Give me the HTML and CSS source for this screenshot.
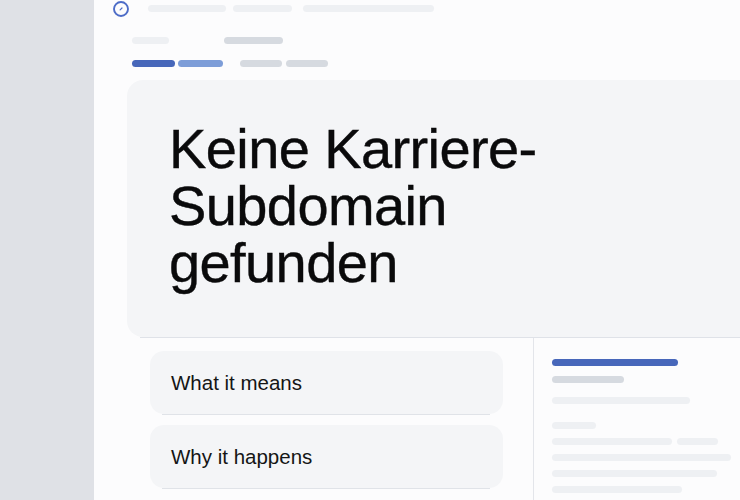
FILE: index.html
```html
<!DOCTYPE html>
<html lang="de">
<head>
<meta charset="utf-8">
<title>Keine Karriere-Subdomain gefunden</title>
<link rel="stylesheet" href="styles.css">
</head>
<body>
<aside class="sidebar"></aside>
<main class="main">
  <div class="topbar">
    <svg class="logo" width="18" height="18" viewBox="0 0 18 18" aria-hidden="true">
      <circle cx="9" cy="9" r="7" fill="none" stroke="#4d6cc7" stroke-width="1.9"/>
      <path d="M8.1 9.9 L10 8" stroke="#4d6cc7" stroke-width="1.2" stroke-linecap="round"/>
    </svg>
    <span class="bar light w78"></span>
    <span class="bar light w59 g7"></span>
    <span class="bar light w131 g11"></span>
  </div>
  <div class="row2">
    <span class="bar light w37"></span>
    <span class="bar mid w59 g55"></span>
  </div>
  <div class="row3">
    <span class="bar blue w43"></span>
    <span class="bar sky w45 g3"></span>
    <span class="bar mid w42 g17"></span>
    <span class="bar mid w42 g4"></span>
  </div>
  <section class="hero">
    <h1 class="title">Keine Karriere-<br>Subdomain<br>gefunden</h1>
  </section>
  <div class="hero-rule"></div>
  <div class="lower">
    <div class="left-col">
      <div class="acc">What it means</div>
      <div class="acc-rule"></div>
      <div class="acc acc-2">Why it happens</div>
      <div class="acc-rule"></div>
    </div>
    <div class="right-col">
      <span class="bar blue w126"></span>
      <span class="bar mid w72 t10"></span>
      <span class="bar light w138 t14"></span>
      <span class="bar light w44 t18"></span>
      <div class="pair t9"><span class="bar light w120"></span><span class="bar light w41 g5"></span></div>
      <span class="bar light w179 t9"></span>
      <span class="bar light w165 t9"></span>
      <span class="bar light w130 t9"></span>
    </div>
  </div>
</main>
</body>
</html>
```
FILE: styles.css
```css
html, body {
  margin: 0;
  padding: 0;
  width: 740px;
  height: 500px;
  overflow: hidden;
  background: #fcfcfd;
  font-family: "Liberation Sans", Arial, sans-serif;
  color: #111;
}
body {
  display: flex;
}
.sidebar {
  width: 94px;
  flex: none;
  height: 500px;
  background: #dfe1e6;
}
.main {
  flex: 1;
  min-width: 0;
  height: 500px;
  overflow: hidden;
}
.bar {
  display: block;
  flex: none;
  height: 7px;
  border-radius: 4px;
}
.light { background: #eef0f3; }
.mid { background: #d6dae0; }
.blue { background: #4767ba; }
.sky { background: #7d9dd8; }

.w37 { width: 37px; }
.w41 { width: 41px; }
.w42 { width: 42px; }
.w43 { width: 43px; }
.w44 { width: 44px; }
.w45 { width: 45px; }
.w59 { width: 59px; }
.w72 { width: 72px; }
.w78 { width: 78px; }
.w120 { width: 120px; }
.w126 { width: 126px; }
.w130 { width: 130px; }
.w131 { width: 131px; }
.w138 { width: 138px; }
.w165 { width: 165px; }
.w179 { width: 179px; }
.g3 { margin-left: 3px; }
.g4 { margin-left: 4px; }
.g5 { margin-left: 5px; }
.g7 { margin-left: 7px; }
.g11 { margin-left: 11px; }
.g17 { margin-left: 17px; }
.g55 { margin-left: 55px; }
.t9 { margin-top: 9px; }
.t10 { margin-top: 10px; }
.t14 { margin-top: 14px; }
.t18 { margin-top: 18px; }

.topbar {
  display: flex;
  align-items: center;
  height: 17px;
  padding-left: 18px;
}
.logo {
  flex: none;
  margin-right: 18px;
}
.row2 {
  display: flex;
  margin-top: 20px;
  padding-left: 38px;
}
.row3 {
  display: flex;
  margin-top: 16px;
  padding-left: 38px;
}
.hero {
  margin-top: 13px;
  margin-left: 33px;
  margin-right: -40px;
  height: 257px;
  box-sizing: border-box;
  padding: 40px 0 0 42px;
  background: #f4f5f7;
  border-radius: 16px;
}
.title {
  margin: 0;
  font-size: 56px;
  line-height: 57px;
  font-weight: 400;
  letter-spacing: -0.6px;
  color: #0a0a0b;
  -webkit-text-stroke: 0.4px #0a0a0b;
}
.hero-rule {
  height: 1px;
  margin-left: 46px;
  background: #dfe2e8;
}
.lower {
  display: flex;
  height: 162px;
}
.left-col {
  width: 440px;
  flex: none;
  border-right: 1px solid #e3e5ea;
  padding-top: 13px;
  box-sizing: border-box;
}
.acc {
  margin-left: 56px;
  width: 353px;
  height: 63px;
  box-sizing: border-box;
  padding-left: 21px;
  display: flex;
  align-items: center;
  background: #f4f5f7;
  border-radius: 14px;
  font-size: 20.5px;
  color: #151515;
}
.acc-2 {
  margin-top: 10px;
}
.acc-rule {
  margin-left: 68px;
  width: 328px;
  height: 1px;
  background: #e0e3e8;
}
.right-col {
  flex: 1;
  padding: 21px 0 0 18px;
  display: flex;
  flex-direction: column;
  align-items: flex-start;
}
.pair {
  display: flex;
}
```
